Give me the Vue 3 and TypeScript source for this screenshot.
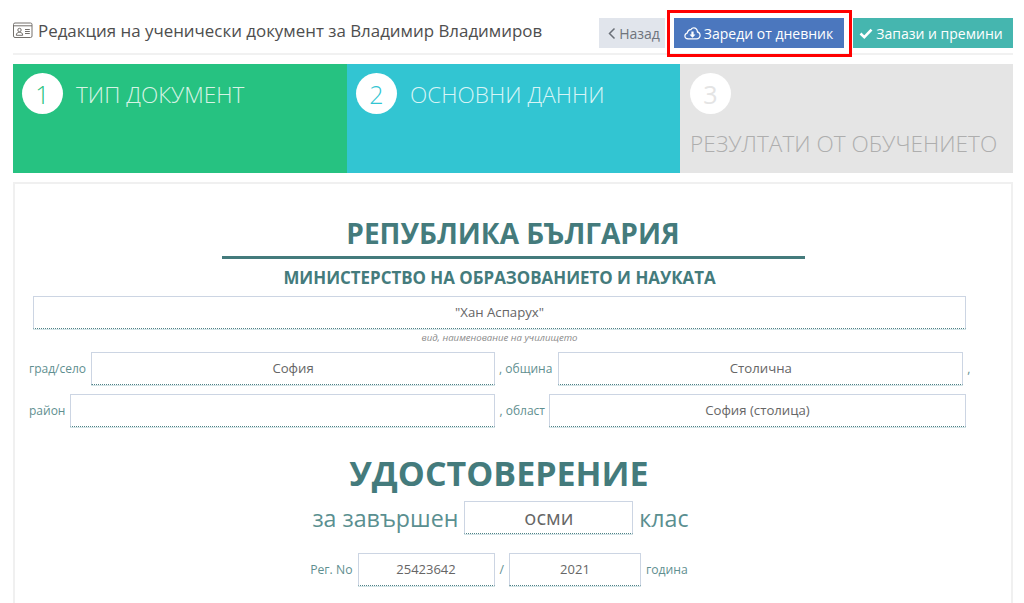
<script setup lang="ts">
interface Step { n: number; label: string; cls: string }
const steps: Step[] = [
  { n: 1, label: 'ТИП ДОКУМЕНТ', cls: 'green' },
  { n: 2, label: 'ОСНОВНИ ДАННИ', cls: 'cyan' },
  { n: 3, label: 'РЕЗУЛТАТИ ОТ ОБУЧЕНИЕТО', cls: 'grey' },
]
</script>

<template>
  <div class="page">
    <header class="head">
      <div class="title">
        <svg class="id" width="20" height="16" viewBox="0 0 20 16" fill="none" stroke="#74706c" stroke-width="1">
          <rect x="0.5" y="1" width="18.500" height="14.500" rx="1.500" />
          <path d="M0.5 3.800h18.500" />
          <circle cx="6.500" cy="8" r="1.700" />
          <path d="M3.300 13.300c0-2.300 1.300-2.900 3.200-2.900s3.200 .6 3.200 2.900z" />
          <path d="M12 7.500h4.800M12 9.500h4.800M12 11.500h4.800" />
        </svg>
        <span>Редакция на ученически документ за Владимир Владимиров</span>
      </div>
      <div class="actions">
        <button class="btn back">
          <svg width="8" height="13" viewBox="0 0 8 13" fill="none" stroke="#6b7078" stroke-width="1.500"><path d="M6.500 1.500L1.500 6.500l5 5" /></svg>
          Назад
        </button>
        <button class="btn load">
          <svg width="17" height="13" viewBox="0 0 17 13" fill="#fff"><path fill-rule="evenodd" d="M4 12.500C1.800 12.500 .3 11 .3 9c0-1.600 1-2.900 2.500-3.400C3 3.500 4.700 2 6.700 2c.5-1 1.900-1.700 3.100-1.700 2.400 0 4 1.700 4.200 4C15.700 5 16.700 6.500 16.700 8.500c0 2.300-1.700 4-4 4zM4.200 11.300h8.400c1.500 0 2.900-1.200 2.900-2.800 0-1.500-1-2.800-2.600-3.100C12.900 3 11.500 1.500 9.800 1.500 8.700 1.500 7.700 2.100 7.300 3.200 5.500 3 4 4.300 3.900 6.400 2.500 6.700 1.500 7.700 1.500 9c0 1.300 1.100 2.300 2.700 2.300z" /><path d="M7.400 4.500h2.200v3h1.900L8.500 10.700 5.500 7.500h1.900z" /></svg>
          Зареди от дневник
          <span class="mark"></span>
        </button>
        <button class="btn save">
          <svg width="14" height="11" viewBox="0 0 14 11" fill="none" stroke="#fff" stroke-width="2.600"><path d="M1.500 5.500l3.800 3.600 7.200-7.500" /></svg>
          Запази и премини
        </button>
      </div>
    </header>

    <div class="steps">
      <div v-for="s in steps" :key="s.n" class="step" :class="s.cls">
        <span class="num">{{ s.n }}</span>
        <span class="lab">{{ s.label }}</span>
      </div>
    </div>

    <main class="card">
      <h1 class="rep">РЕПУБЛИКА БЪЛГАРИЯ</h1>
      <div class="rule"></div>
      <h2 class="min">МИНИСТЕРСТВО НА ОБРАЗОВАНИЕТО И НАУКАТА</h2>

      <div class="school field">"Хан Аспарух"</div>
      <div class="hint">вид, наименование на училището</div>

      <div class="row r1">
        <span class="l">град/село</span>
        <div class="field f1">София</div>
        <span class="l after a1">, община</span>
        <div class="field f2">Столична</div>
        <span class="l comma">,</span>
      </div>
      <div class="row r2">
        <span class="l">район</span>
        <div class="field f3"></div>
        <span class="l after a2">, област</span>
        <div class="field f4">София (столица)</div>
      </div>

      <h1 class="cert">УДОСТОВЕРЕНИЕ</h1>
      <div class="grade">
        <span>за завършен</span>
        <div class="field g">осми</div>
        <span>клас</span>
      </div>
      <div class="reg">
        <span>Рег. No</span>
        <div class="field n">25423642</div>
        <span>/</span>
        <div class="field y">2021</div>
        <span>година</span>
      </div>
    </main>
  </div>
</template>

<style>
html, body { margin: 0; background: #fff; overflow: hidden; }
</style>

<style scoped>
.page { width: 1000px; height: 603px; padding: 0 11px 0 13px; font-family: "Open Sans", sans-serif; overflow: hidden; }
.head { height: 53px; display: flex; justify-content: space-between; border-bottom: 2px solid #f1f1f1; }
.title { display: flex; align-items: center; gap: 5px; height: 62px; margin-top: -1px; font-size: 16.900px; color: #4e4e4e; white-space: nowrap; }
.id { flex: none; }
.actions { display: flex; gap: 9px; padding-top: 18px; }
.btn { position: relative; height: 30px; border: 0; padding: 0; display: flex; align-items: center; justify-content: center; gap: 3px; font: 14px "Open Sans", sans-serif; color: #fff; white-space: nowrap; }
.back { width: 66px; background: #e1e5ec; color: #6f747c; padding-left: 4px; box-sizing: border-box; }
.load { width: 170px; background: #4b77be; padding-right: 1px; box-sizing: border-box; }
.save { width: 160px; background: #45b6af; padding-right: 4px; box-sizing: border-box; }
.mark { position: absolute; left: -7px; top: -8px; width: 179px; height: 41px; border: 3px solid #f00; pointer-events: none; }
.steps { display: flex; height: 109px; margin-top: 9px; }
.step { flex: none; width: 333px; box-sizing: border-box; padding: 9px 9px 0 9px; display: flex; flex-wrap: wrap; align-items: flex-start; align-content: flex-start; }
.green { background: #26c281; color: #d7f3e5; width: 334px; }
.cyan { background: #32c5d2; color: #d8f4f6; }
.grey { background: #e5e5e5; color: #aeaeae; padding-left: 10px; }
.num { width: 41px; height: 41px; border-radius: 50%; background: #fff; display: flex; align-items: center; justify-content: center; font-size: 25px; font-weight: 300; margin-right: 13px; }
.green .num { color: #26c281; }
.cyan .num { color: #32c5d2; }
.grey .num { color: #e4e4e4; font-weight: 400; }
.lab { font-size: 22.600px; font-weight: 300; line-height: 43px; white-space: nowrap; }
.grey .lab { margin-top: 9px; line-height: 42px; }
.card { box-sizing: border-box; height: 440px; margin-top: 9px; border: 2px solid #f0f0f0; border-bottom: 0; padding: 0 0 0 14px; }
h1, h2 { margin: 0; text-align: center; color: #447b7c; font-weight: 700; }
.rep { font-size: 28px; line-height: 34px; margin: 32px 32px 0 18px; }
.rule { width: 583px; height: 3px; background: #447b7c; margin: 6px 0 0 193px; }
.min { font-size: 16.900px; line-height: 22px; margin: 8px 59px 0 18px; }
.field { box-sizing: border-box; flex: none; height: 33px; padding-bottom: 2px; border: 1px solid #ccd5e3; border-bottom: 1px dotted #4f8286; box-shadow: 0 1px 0 #d3e3e6; display: flex; align-items: center; justify-content: center; font-size: 13.200px; color: #666; background: #fff; }
.school { width: 933px; margin: 7px 0 0 4px; }
.hint { width: 933px; margin: 2px 0 0 4px; text-align: center; font-size: 9.600px; line-height: 13px; font-style: italic; color: #8a8a8a; }
.row { display: flex; align-items: center; height: 33px; font-size: 12px; color: #5f8f90; }
.r1 { margin-top: 8px; }
.r2 { margin-top: 9px; }
.l { white-space: nowrap; }
.after { margin: 0 5px 0 4px; }
.a1 { margin-right: 6px; }
.a2 { margin-right: 4px; }
.f1 { width: 404px; margin-left: 5px; }
.f2 { width: 405px; }
.f3 { width: 425px; margin-left: 5px; }
.f4 { width: 417px; }
.comma { margin-left: 4px; }
.cert { font-size: 34px; line-height: 44px; margin: 24px 42px 0 0; }
.grade { display: flex; align-items: center; justify-content: center; gap: 6px; margin: 6px 39px 0 0; height: 33px; font-size: 23.200px; color: #5a8f90; }
.g { width: 169px; font-size: 20px; padding-bottom: 0; }
.reg { display: flex; align-items: center; justify-content: center; gap: 5px; margin: 19px 42px 0 0; height: 33px; font-size: 12.200px; color: #5f8f90; }
.n { width: 137px; font-size: 13px; }
.y { width: 132px; font-size: 13px; }
</style>
